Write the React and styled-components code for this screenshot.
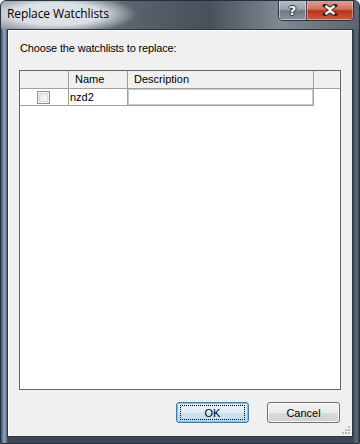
import styled, { createGlobalStyle } from 'styled-components';

const Global = createGlobalStyle`
  html, body {
    margin: 0;
    padding: 0;
    background: #ffffff;
  }
  body {
    font-family: "Liberation Sans", Arial, sans-serif;
  }
`;

const App = () => {
  return (
    <>
      <Global />
      <Window>
        <TitleBar>
          <Title>Replace Watchlists</Title>
          <Caption>
            <HelpButton>?</HelpButton>
            <CloseButton>
              <svg width='16' height='12' viewBox='0 0 16 12'>
                <path
                  d='M3 1.5 L8 5 L13 1.5 M3 10.5 L8 7 L13 10.5'
                  fill='none'
                  stroke='#3a2620'
                  strokeWidth='4.4'
                  strokeLinecap='square'
                />
                <path
                  d='M3.5 2 L8 5.3 L12.5 2 M3.5 10 L8 6.7 L12.5 10'
                  fill='none'
                  stroke='#ffffff'
                  strokeWidth='2.4'
                />
              </svg>
            </CloseButton>
          </Caption>
        </TitleBar>
        <Client>
          <Prompt>Choose the watchlists to replace:</Prompt>
          <Grid>
            <HeaderRow>
              <HeadCell />
              <HeadCell>Name</HeadCell>
              <HeadCell>Description</HeadCell>
              <HeadCell $last />
            </HeaderRow>
            <Row>
              <CheckCell>
                <Check />
              </CheckCell>
              <Cell>nzd2</Cell>
              <Cell $focus />
              <Blank />
            </Row>
          </Grid>
          <Footer>
            <Button $default>
              <Focus>OK</Focus>
            </Button>
            <Button>Cancel</Button>
          </Footer>
          <Grip>
            <svg width='10' height='10' viewBox='0 0 10 10'>
              {[
                [7, 1],
                [4, 4],
                [7, 4],
                [1, 7],
                [4, 7],
                [7, 7],
              ].map(([x, y]) => (
                <rect key={x + '-' + y} x={x} y={y} width='2' height='2' fill='#b8b8b8' />
              ))}
            </svg>
          </Grip>
        </Client>
      </Window>
    </>
  );
};

const Window = styled.div`
  width: 360px;
  height: 444px;
  box-sizing: border-box;
  display: flex;
  flex-direction: column;
  border: 1px solid #24303c;
  border-radius: 6px 6px 0 0;
  background: linear-gradient(90deg, #44505c 0px, #8aa4bf 3px, #6f86a0 5px, #3b4753 7px, #3b4753 352px, #5d6a77 355px, #3b4753 359px);
  overflow: hidden;
`;

const TitleBar = styled.div`
  height: 28px;
  flex-shrink: 0;
  display: flex;
  justify-content: space-between;
  align-items: flex-start;
  padding-left: 6px;
  background:
    radial-gradient(ellipse 80px 20px at 56px 13px, rgba(226, 230, 234, 0.95) 55%, rgba(226, 230, 234, 0) 100%),
    linear-gradient(90deg, #8c969f 0%, #55606b 40%, #46515c 58%, #7e8994 78%, #5a6571 100%);
`;

const Title = styled.div`
  font-family: "Open Sans", "Noto Sans", sans-serif;
  font-size: 12px;
  color: #000000;
  line-height: 14px;
  padding-top: 6px;
  letter-spacing: -0.1px;
`;

const Caption = styled.div`
  display: flex;
  margin-right: 5px;
  margin-top: -1px;
  height: 20px;
  border: 1px solid #2b3641;
  border-top: none;
  border-radius: 0 0 5px 5px;
  overflow: hidden;
`;

const HelpButton = styled.div`
  width: 27px;
  display: flex;
  justify-content: center;
  align-items: center;
  font-family: "DejaVu Sans", sans-serif;
  font-weight: bold;
  font-size: 13px;
  color: #ffffff;
  text-shadow: 1px 0 #2c3138, -1px 0 #2c3138, 0 1px #2c3138, 0 -1px #2c3138;
  border-right: 1px solid #3a444e;
  background: linear-gradient(180deg, #b8c0c8 0%, #9aa4ae 45%, #6e7882 55%, #8a949e 100%);
  box-shadow: inset 0 0 0 1px rgba(255, 255, 255, 0.45);
`;

const CloseButton = styled.div`
  width: 46px;
  display: flex;
  justify-content: center;
  align-items: center;
  background: linear-gradient(180deg, #e4a394 0%, #d0735f 45%, #b8321b 55%, #d45a3c 100%);
  box-shadow: inset 0 0 0 1px rgba(255, 220, 210, 0.45);
`;

const Client = styled.div`
  flex: 1;
  margin: 0 6px 6px 6px;
  position: relative;
  display: flex;
  flex-direction: column;
  background: #f0f0f0;
  border: 1px solid #2a3540;
  box-shadow: inset 1px 1px 0 #ffffff;
  padding: 0 11px 0 11px;
`;

const Prompt = styled.div`
  font-size: 11px;
  color: #000000;
  line-height: 13px;
  letter-spacing: -0.15px;
  padding: 12px 0 0 1px;
  height: 28px;
`;

const Grid = styled.div`
  height: 320px;
  box-sizing: border-box;
  border: 1px solid #646464;
  background: #ffffff;
  display: flex;
  flex-direction: column;
`;

const columns = '49px 59px 186px 1fr';

const HeaderRow = styled.div`
  display: grid;
  grid-template-columns: ${columns};
  height: 17px;
  border-bottom: 1px solid #a0a0a0;
  background: #f0f0f0;
`;

const HeadCell = styled.div`
  font-size: 11px;
  line-height: 17px;
  color: #000000;
  padding-left: 6px;
  border-right: ${(p) => (p.$last ? 'none' : '1px solid #a0a0a0')};
`;

const Row = styled.div`
  display: grid;
  grid-template-columns: ${columns};
  height: 17px;
`;

const CheckCell = styled.div`
  display: flex;
  align-items: center;
  justify-content: center;
  border-bottom: 1px solid #a0a0a0;
  border-right: 1px solid #a0a0a0;
`;

const Check = styled.div`
  width: 13px;
  height: 13px;
  box-sizing: border-box;
  margin-left: -2px;
  border: 1px solid #8e8f8f;
  background: linear-gradient(135deg, #dcdcdc 0%, #f4f4f4 60%, #fbfbfb 100%);
  box-shadow: inset 0 0 0 1px #f4f4f4, inset 0 0 0 2px #d8d8d8;
`;

const Cell = styled.div`
  font-size: 11px;
  line-height: 16px;
  color: #000000;
  padding-left: 1px;
  box-sizing: border-box;
  border-bottom: 1px solid #a0a0a0;
  border-right: 1px solid #a0a0a0;
  box-shadow: ${(p) => (p.$focus ? 'inset 0 0 0 1px #c8c8c8' : 'none')};
`;

const Blank = styled.div`
  background: #ffffff;
`;

const Footer = styled.div`
  display: flex;
  justify-content: flex-end;
  gap: 18px;
  padding-top: 12px;
  padding-right: 1px;
`;

const Button = styled.div`
  width: 73px;
  height: 21px;
  box-sizing: border-box;
  display: flex;
  align-items: center;
  justify-content: center;
  font-size: 11px;
  color: #000000;
  border-radius: 3px;
  border: 1px solid ${(p) => (p.$default ? '#3c7fb1' : '#707070')};
  background: ${(p) =>
    p.$default
      ? 'linear-gradient(180deg, #eaf4fb 0%, #dfedf8 50%, #cde3f3 51%, #c2dcf0 100%)'
      : 'linear-gradient(180deg, #f2f2f2 0%, #ebebeb 50%, #dddddd 51%, #cfcfcf 100%)'};
  box-shadow: ${(p) =>
    p.$default ? 'inset 0 0 0 1px #6fc8f2' : 'inset 0 0 0 1px rgba(255, 255, 255, 0.8)'};
`;

const Focus = styled.div`
  width: 63px;
  height: 13px;
  display: flex;
  align-items: center;
  justify-content: center;
  border: 1px dotted #000000;
`;

const Grip = styled.div`
  position: absolute;
  right: 1px;
  bottom: 1px;
  width: 10px;
  height: 10px;
  line-height: 0;
`;

export default App;
